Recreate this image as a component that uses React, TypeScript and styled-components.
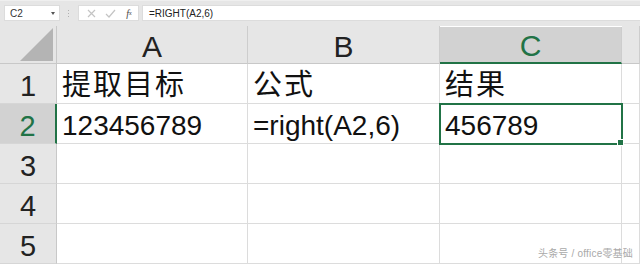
import React from "react";
import styled, { createGlobalStyle, css } from "styled-components";

const GREEN = "#217346";

const GlobalStyle = createGlobalStyle`
  html, body {
    margin: 0;
    padding: 0;
    background: #ffffff;
    overflow: hidden;
  }
  body {
    font-family: "Liberation Sans", "Noto Sans CJK SC", sans-serif;
  }
`;

const Sheet = styled.div`
  width: 640px;
  height: 264px;
  position: relative;
  overflow: hidden;
  background: #ffffff;
`;

const FormulaBar = styled.div`
  display: flex;
  align-items: flex-start;
  height: 26px;
  box-sizing: border-box;
  padding: 4px 0 0 4px;
  background: #e6e6e6;
  border-top: 1px solid #efefef;
`;

const NameBox = styled.div`
  display: flex;
  align-items: center;
  justify-content: space-between;
  width: 56px;
  height: 16px;
  box-sizing: border-box;
  padding: 0 4px 0 5px;
  background: #ffffff;
  border: 1px solid #dcdcdc;
  font-size: 10px;
  color: #333;
`;

const Caret = styled.span`
  width: 0;
  height: 0;
  border-left: 2.5px solid transparent;
  border-right: 2.5px solid transparent;
  border-top: 3px solid #555;
`;

const Grip = styled.div`
  display: flex;
  flex-direction: column;
  justify-content: center;
  gap: 2px;
  height: 16px;
  margin: 0 9px 0 8px;
  span {
    width: 1px;
    height: 1px;
    background: #b0b0b0;
  }
`;

const ButtonGroup = styled.div`
  display: flex;
  align-items: center;
  width: 61px;
  height: 16px;
  box-sizing: border-box;
  padding-left: 6px;
  gap: 7px;
  background: #ffffff;
  border: 1px solid #dcdcdc;
`;

const BarButton = styled.span<{ $dark?: boolean }>`
  display: flex;
  align-items: center;
  justify-content: center;
  width: 12px;
  height: 14px;
  font-family: "Liberation Serif", serif;
  font-style: italic;
  font-size: 10px;
  color: ${(p) => (p.$dark ? "#444" : "#bdbdbd")};
`;

const FormulaInput = styled.div`
  flex: 1;
  height: 16px;
  margin-left: 3px;
  box-sizing: border-box;
  padding-left: 6px;
  display: flex;
  align-items: center;
  background: #ffffff;
  border: 1px solid #dcdcdc;
  border-right: none;
  font-size: 10px;
  color: #222;
`;

const Grid = styled.div`
  display: grid;
  grid-template-columns: 57px 191px 192px 182px 1fr;
  grid-template-rows: 38px repeat(5, 40px);
`;

const headerBase = css`
  display: flex;
  align-items: flex-end;
  justify-content: center;
  box-sizing: border-box;
  background: #e6e6e6;
  color: #222;
  line-height: 32px;
`;

const Corner = styled.div`
  ${headerBase};
  justify-content: flex-end;
  padding: 0 3px 2px 0;
  border-right: 1px solid #c8c8c8;
  border-bottom: 1px solid #c8c8c8;
`;

const ColHeader = styled.div<{ $active?: boolean }>`
  ${headerBase};
  font-size: 30px;
  padding-bottom: 0;
  border-right: 1px solid #cdcdcd;
  border-bottom: 1px solid #c8c8c8;
  ${(p) =>
    p.$active &&
    css`
      background: #d2d2d2;
      color: ${GREEN};
      border-bottom: 2px solid ${GREEN};
      margin-top: 1px;
    `}
`;

const RowHeader = styled.div<{ $active?: boolean }>`
  ${headerBase};
  font-size: 29px;
  padding-bottom: 1px;
  border-right: 1px solid #c8c8c8;
  border-bottom: 1px solid #d6d6d6;
  ${(p) =>
    p.$active &&
    css`
      background: #d2d2d2;
      color: ${GREEN};
      border-right: 2px solid ${GREEN};
    `}
`;

const Cell = styled.div<{ $selected?: boolean; $cjk?: boolean }>`
  position: relative;
  display: flex;
  align-items: flex-end;
  box-sizing: border-box;
  padding: 0 0 1px 5px;
  font-size: 28px;
  line-height: 32px;
  color: #111;
  white-space: nowrap;
  border-right: 1px solid #dcdcdc;
  border-bottom: 1px solid #dcdcdc;
  ${(p) =>
    p.$cjk &&
    css`
      letter-spacing: 2px;
      font-size: 29px;
      padding-bottom: 2px;
    `}
  ${(p) =>
    p.$selected &&
    css`
      outline: 2px solid ${GREEN};
      outline-offset: -1px;
      z-index: 1;
      &::after {
        content: "";
        position: absolute;
        right: -3px;
        bottom: -3px;
        width: 5px;
        height: 5px;
        background: ${GREEN};
        border: 1px solid #ffffff;
      }
    `}
`;

const Watermark = styled.div`
  position: absolute;
  right: 7px;
  bottom: 4px;
  font-size: 10px;
  color: #a9a9a9;
  letter-spacing: 0.2px;
`;

const columns = ["A", "B", "C", "D"];

const rows: { label: string; cells: { text: string; cjk?: boolean }[] }[] = [
  { label: "1", cells: [{ text: "提取目标", cjk: true }, { text: "公式", cjk: true }, { text: "结果", cjk: true }, { text: "" }] },
  { label: "2", cells: [{ text: "123456789" }, { text: "=right(A2,6)" }, { text: "456789" }, { text: "" }] },
  { label: "3", cells: [{ text: "" }, { text: "" }, { text: "" }, { text: "" }] },
  { label: "4", cells: [{ text: "" }, { text: "" }, { text: "" }, { text: "" }] },
  { label: "5", cells: [{ text: "" }, { text: "" }, { text: "" }, { text: "" }] },
];

const App = () => {
  return (
    <Sheet>
      <GlobalStyle />
      <FormulaBar>
        <NameBox>
          C2
          <Caret />
        </NameBox>
        <Grip>
          <span />
          <span />
          <span />
        </Grip>
        <ButtonGroup>
          <BarButton>
            <svg width="9" height="9" viewBox="0 0 9 9">
              <path d="M1 1 L8 8 M8 1 L1 8" stroke="#c4c4c4" strokeWidth="1.2" fill="none" />
            </svg>
          </BarButton>
          <BarButton>
            <svg width="11" height="9" viewBox="0 0 11 9">
              <path d="M1 5 L4 8 L10 1" stroke="#c4c4c4" strokeWidth="1.2" fill="none" />
            </svg>
          </BarButton>
          <BarButton $dark>
            f<sub style={{ fontSize: 6 }}>x</sub>
          </BarButton>
        </ButtonGroup>
        <FormulaInput>=RIGHT(A2,6)</FormulaInput>
      </FormulaBar>
      <Grid>
        <Corner>
          <svg width="33" height="33" viewBox="0 0 33 33">
            <polygon points="33,0 33,33 0,33" fill="#b4b4b4" />
          </svg>
        </Corner>
        {columns.map((c) => (
          <ColHeader key={c} $active={c === "C"}>
            {c === "D" ? "" : c}
          </ColHeader>
        ))}
        {rows.map((r) => (
          <React.Fragment key={r.label}>
            <RowHeader $active={r.label === "2"}>{r.label}</RowHeader>
            {r.cells.map((cell, i) => (
              <Cell
                key={i}
                $cjk={cell.cjk}
                $selected={r.label === "2" && i === 2}
              >
                {cell.text}
              </Cell>
            ))}
          </React.Fragment>
        ))}
      </Grid>
      <Watermark>头条号 / office零基础</Watermark>
    </Sheet>
  );
};

export default App;
